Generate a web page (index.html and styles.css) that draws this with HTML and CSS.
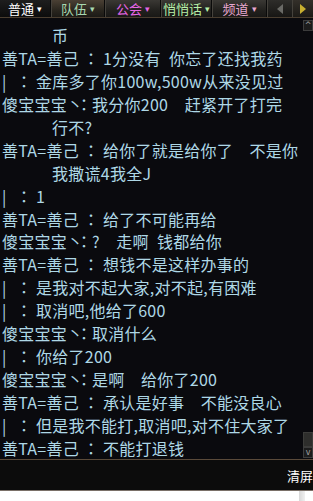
FILE: index.html
```html
<!DOCTYPE html>
<html lang="zh">
<head>
<meta charset="utf-8">
<title>聊天</title>
<link rel="stylesheet" href="styles.css">
</head>
<body>
<div class="tabs">
  <div class="tab tab-normal">普通<span class="arr">▾</span></div>
  <div class="tab tab-team">队伍<span class="arr">▾</span></div>
  <div class="tab tab-guild">公会<span class="arr">▾</span></div>
  <div class="tab tab-whisper">悄悄话<span class="arr">▾</span></div>
  <div class="tab tab-channel">频道<span class="arr">▾</span></div>
  <div class="nav nav-left"><svg width="8" height="10" viewBox="0 0 8 10"><path d="M7 0 L1 5 L7 10 Z" fill="#6a6a66"/></svg></div>
  <div class="nav nav-right"><svg width="8" height="10" viewBox="0 0 8 10"><path d="M1 0 L7 5 L1 10 Z" fill="#c8b030"/></svg></div>
</div>
<div class="chat">
  <div class="log">
    <div class="ln cont">币</div>
    <div class="ln">善TA=善己<span class="c">：</span>1分没有&ensp;你忘了还找我药</div>
    <div class="ln"><span class="bar">|</span><span class="c">：</span>金库多了你100w,500w从来没见过</div>
    <div class="ln">傻宝宝宝<span class="dot">丶</span><span class="c s">：</span>我分你200&ensp;&ensp;赶紧开了打完</div>
    <div class="ln cont">行不?</div>
    <div class="ln">善TA=善己<span class="c">：</span>给你了就是给你了&ensp;&ensp;不是你</div>
    <div class="ln cont">我撒谎4我全J</div>
    <div class="ln"><span class="bar">|</span><span class="c">：</span>1</div>
    <div class="ln">善TA=善己<span class="c">：</span>给了不可能再给</div>
    <div class="ln">傻宝宝宝<span class="dot">丶</span><span class="c s">：</span>?&ensp;&ensp;走啊&ensp;钱都给你</div>
    <div class="ln">善TA=善己<span class="c">：</span>想钱不是这样办事的</div>
    <div class="ln"><span class="bar">|</span><span class="c">：</span>是我对不起大家,对不起,有困难</div>
    <div class="ln"><span class="bar">|</span><span class="c">：</span>取消吧,他给了600</div>
    <div class="ln">傻宝宝宝<span class="dot">丶</span><span class="c s">：</span>取消什么</div>
    <div class="ln"><span class="bar">|</span><span class="c">：</span>你给了200</div>
    <div class="ln">傻宝宝宝<span class="dot">丶</span><span class="c s">：</span>是啊&ensp;&ensp;给你了200</div>
    <div class="ln">善TA=善己<span class="c">：</span>承认是好事&ensp;&ensp;不能没良心</div>
    <div class="ln"><span class="bar">|</span><span class="c">：</span>但是我不能打,取消吧,对不住大家了</div>
    <div class="ln">善TA=善己<span class="c">：</span>不能打退钱</div>
  </div>
  <div class="scroll">
    <div class="sbtn">^</div>
    <div class="strack"></div>
    <div class="sthumb"></div>
    <div class="sbtn sdown">v</div>
  </div>
</div>
<div class="footer">
  <span class="clear">清屏</span>
</div>
<div class="bottom">
  <div class="shade"></div>
</div>
</body>
</html>
```
FILE: styles.css
```css
html, body {
  margin: 0;
  padding: 0;
  background: #ffffff;
  width: 313px;
  height: 501px;
  overflow: hidden;
  font-family: "Noto Sans CJK SC", "Noto Sans", sans-serif;
}

.tabs {
  display: flex;
  height: 17px;
  background: #141414;
  border-bottom: 1px solid #4a3e30;
}

.tab {
  display: flex;
  align-items: center;
  justify-content: center;
  gap: 3px;
  font-size: 13px;
  line-height: 17px;
  background: linear-gradient(#3a3834, #22211e 60%, #191816);
  border-right: 1px solid #0a0a0a;
  border-left: 1px solid #45423c;
  box-sizing: border-box;
}

.arr {
  font-size: 9px;
  line-height: 17px;
}

.tab-normal { width: 51px; color: #ffffff; background: linear-gradient(#1e1e1e, #0c0c0c); border-left: none; }
.tab-team { width: 54px; color: #a8d8b0; background: linear-gradient(#4a4034, #2a261f 60%, #1c1a16); }
.tab-guild { width: 56px; color: #e466e4; }
.tab-whisper { width: 51px; color: #b8f0a8; }
.tab-channel { width: 55px; color: #e8a8d0; }

.nav {
  display: flex;
  align-items: center;
  justify-content: center;
  background: linear-gradient(#2e2d2a, #171614);
  border-left: 1px solid #45423c;
  box-sizing: border-box;
}
.nav-left { width: 25px; }
.nav-right { width: 21px; background: linear-gradient(#34302a, #1c1a16); }

.chat {
  display: flex;
  height: 441px;
  background: #0a0a0e;
  border-bottom: 1px solid #5a4a3a;
}

.log {
  flex: 1;
  padding: 6px 0 0 2px;
  color: #aed8e6;
  font-size: 16px;
  letter-spacing: 0.25px;
  line-height: 23px;
  white-space: nowrap;
}

.ln { height: 22.95px; }
.cont { padding-left: 50px; }
.bar { display: inline-block; width: 10px; }
.dot { letter-spacing: -7px; }
.c {
  font-family: "Noto Sans CJK TC", "Noto Sans CJK SC", sans-serif;
  font-feature-settings: "locl" 0;
  display: inline-block;
  width: 24px;
  text-align: center;
  letter-spacing: 0;
}
.c.s { width: 16px; }

.scroll {
  width: 10px;
  display: flex;
  flex-direction: column;
  padding-top: 2px;
  box-sizing: border-box;
}

.sbtn {
  height: 11px;
  background: #1c1c1c;
  border: 1px solid #3c3c3c;
  box-sizing: border-box;
  color: #a0a0a0;
  font-size: 8px;
  line-height: 10px;
  text-align: center;
  font-family: "DejaVu Sans", sans-serif;
}

.strack { flex: 1; }
.sthumb { height: 15px; background: #2e2e2c; border: 1px solid #3c3c3a; box-sizing: border-box; }
.sdown { margin-bottom: 1px; }

.footer {
  height: 30px;
  background: #0c0c0c;
  border-bottom: 1px solid #7a7068;
  display: flex;
  align-items: center;
  justify-content: flex-end;
}

.clear {
  color: #ffffff;
  font-size: 13px;
  width: 26px;
  overflow: hidden;
  white-space: nowrap;
}

.bottom {
  height: 10px;
  background: #ffffff;
  display: flex;
  justify-content: flex-end;
}

.shade {
  width: 6px;
  margin-right: 8px;
  background: linear-gradient(90deg, #d8d8d8, #f0f0f0);
}
```
